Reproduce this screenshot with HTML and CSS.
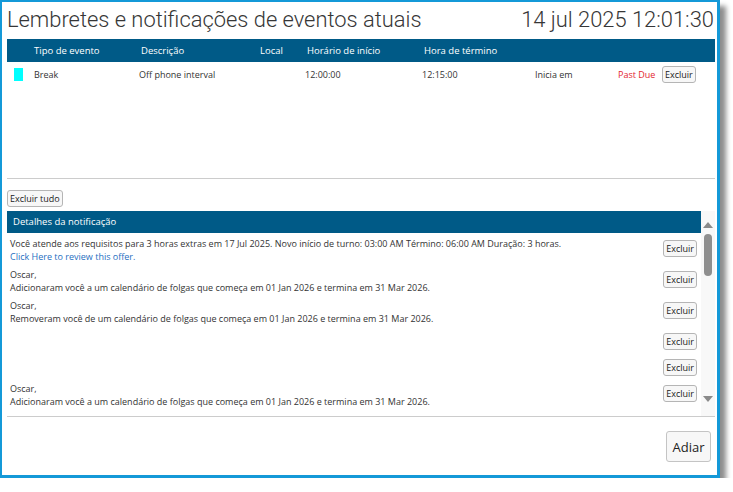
FILE: index.html
```html
<!DOCTYPE html>
<html lang="pt">

<head>
  <meta charset="UTF-8">
  <meta name="viewport" content="width=device-width, initial-scale=1.0">
  <title>Lembretes e notificações</title>
  <link rel="stylesheet" href="styles.css">
</head>

<body>
  <div class="dialog">
    <header class="dialog_title">
      <h1>Lembretes e notificações de eventos atuais</h1>
      <span class="dialog_clock">14 jul 2025 12:01:30</span>
    </header>

    <div class="events">
      <div class="events_row events_row--head">
        <span></span>
        <span>Tipo de evento</span>
        <span>Descrição</span>
        <span>Local</span>
        <span>Horário de início</span>
        <span>Hora de término</span>
        <span></span>
        <span></span>
        <span></span>
      </div>
      <div class="events_row">
        <span class="events_swatch"></span>
        <span>Break</span>
        <span>Off phone interval</span>
        <span></span>
        <span>12:00:00</span>
        <span>12:15:00</span>
        <span>Inicia em</span>
        <span class="events_due">Past Due</span>
        <span><button class="btn-small">Excluir</button></span>
      </div>
    </div>

    <div class="toolbar">
      <button class="btn-small">Excluir tudo</button>
    </div>

    <div class="notes">
      <div class="notes_list">
        <div class="notes_head">Detalhes da notificação</div>

        <div class="notes_item">
          <p>Você atende aos requisitos para 3 horas extras em 17 Jul 2025. Novo início de turno: 03:00 AM Término: 06:00 AM Duração: 3 horas.<br>
            <a href="#">Click Here to review this offer.</a></p>
          <button class="btn-small">Excluir</button>
        </div>
        <div class="notes_item">
          <p>Oscar,<br>Adicionaram você a um calendário de folgas que começa em 01 Jan 2026 e termina em 31 Mar 2026.</p>
          <button class="btn-small">Excluir</button>
        </div>
        <div class="notes_item">
          <p>Oscar,<br>Removeram você de um calendário de folgas que começa em 01 Jan 2026 e termina em 31 Mar 2026.</p>
          <button class="btn-small">Excluir</button>
        </div>
        <div class="notes_item notes_item--empty">
          <p></p>
          <button class="btn-small">Excluir</button>
        </div>
        <div class="notes_item notes_item--empty">
          <p></p>
          <button class="btn-small">Excluir</button>
        </div>
        <div class="notes_item">
          <p>Oscar,<br>Adicionaram você a um calendário de folgas que começa em 01 Jan 2026 e termina em 31 Mar 2026.</p>
          <button class="btn-small">Excluir</button>
        </div>
      </div>

      <div class="scrollbar">
        <span class="scrollbar_up"></span>
        <span class="scrollbar_thumb"></span>
        <span class="scrollbar_down"></span>
      </div>
    </div>

    <footer class="dialog_footer">
      <button class="btn-big">Adiar</button>
    </footer>
  </div>
</body>

</html>
```

FILE: styles.css
```css
* {
  box-sizing: border-box;
  padding: 0;
  margin: 0;
}

body {
  background-color: #ffffff;
  font-family: 'Open Sans', 'Noto Sans', sans-serif;
  font-size: 9px;
  color: #333333;
}

.dialog {
  width: 720px;
  height: 478px;
  border: 2px solid #1499d8;
  border-right-width: 3px;
  border-bottom-width: 3px;
  padding: 0 2px 0 5px;
  background-color: #ffffff;
  box-shadow: 6px 6px 5px rgba(0, 0, 0, 0.45);
  display: flex;
  flex-direction: column;
}

.dialog_title {
  display: flex;
  justify-content: space-between;
  align-items: center;
  height: 35px;
  padding-right: 1px;
  color: #363636;
  font-family: Roboto, sans-serif;
  font-weight: 300;
}

.dialog_title h1 {
  font-size: 21.9px;
  font-weight: 300;
}

.dialog_clock {
  font-size: 21.9px;
}

/* events table */

.events {
  height: 140px;
  margin-top: 2px;
  border-bottom: 1px solid #cccccc;
}

.events_row {
  display: grid;
  grid-template-columns: 27px 105px 119px 47px 117px 113px 83px 44px 1fr;
  align-items: center;
  height: 24px;
}

.events_row--head {
  height: 23px;
  background-color: #005a87;
  color: #ffffff;
  font-size: 9.5px;
}

.events_row--head span {
  padding-left: 2px;
}

.events_row--head span:nth-child(2) {
  padding-left: 0;
}

.events_swatch {
  width: 9px;
  height: 13px;
  margin-left: 7px;
  background-color: #00ffff;
}

.events_due {
  color: #e3262e;
}

/* buttons */

.btn-small {
  font-family: inherit;
  font-size: 9px;
  color: #222222;
  background-color: #f7f7f7;
  border: 1px solid #b5b5b5;
  border-radius: 3px;
  height: 17px;
  padding: 0 2px;
}

.btn-big {
  font-family: inherit;
  font-size: 13px;
  color: #222222;
  background-color: #f7f7f7;
  border: 1px solid #c4c4c4;
  border-radius: 3px;
  height: 31px;
  width: 45px;
}

.toolbar {
  padding: 11px 0 4px;
}

/* notifications */

.notes {
  display: flex;
  height: 206px;
  border-bottom: 1px solid #cccccc;
}

.notes_list {
  flex: 1;
  overflow: hidden;
}

.notes_head {
  height: 22px;
  padding-left: 6px;
  line-height: 22px;
  background-color: #005a87;
  color: #ffffff;
  font-size: 9.5px;
}

.notes_item {
  display: flex;
  justify-content: space-between;
  align-items: flex-start;
  padding: 3px 4px 3px 3px;
}

.notes_item:nth-child(2) {
  padding-top: 5px;
}

.notes_item p {
  line-height: 12.5px;
}

.notes_item .btn-small {
  margin-top: 2px;
}

.notes_item--empty {
  height: 26px;
}

.notes_item a {
  color: #1f6fbf;
  text-decoration: none;
}

.scrollbar {
  width: 14px;
  display: flex;
  flex-direction: column;
  align-items: center;
  background-color: #f8f8f8;
  padding-top: 11px;
}

.scrollbar_up {
  border-left: 5px solid transparent;
  border-right: 5px solid transparent;
  border-bottom: 6px solid #8a8a8a;
}

.scrollbar_thumb {
  width: 8px;
  height: 42px;
  margin-top: 6px;
  border-radius: 4px;
  background-color: #8f8f8f;
}

.scrollbar_down {
  margin-top: auto;
  margin-bottom: 14px;
  border-left: 5px solid transparent;
  border-right: 5px solid transparent;
  border-top: 6px solid #8a8a8a;
}

.dialog_footer {
  display: flex;
  justify-content: flex-end;
  padding: 14px 4px 0 0;
}
```
